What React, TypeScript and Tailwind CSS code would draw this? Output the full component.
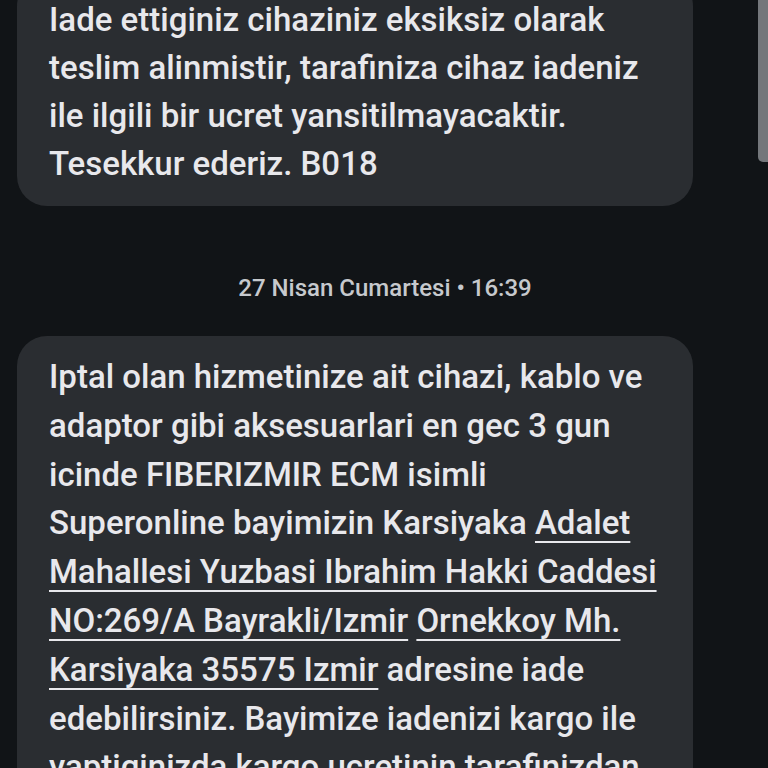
import React from 'react';

const font = { fontFamily: 'Roboto, "Noto Sans", sans-serif' };

function Link({ children }: { children: React.ReactNode }) {
  return <span className="underline decoration-2 underline-offset-[7px]">{children}</span>;
}

export default function App() {
  return (
    <div className="relative h-[768px] w-[768px] overflow-hidden bg-[#111417]" style={font}>
      {/* scrollbar thumb */}
      <div className="absolute right-0 top-0 h-[162px] w-[10px] rounded-bl-[5px] bg-[#74777b]" />

      <div className="flex flex-col">
        {/* older message, scrolled past the top */}
        <div className="ml-[17px] mr-[75px] -mt-[24px] rounded-[30px] bg-[#2a2d31] px-[32px] pt-[20px] pb-[18px] text-[33px] font-medium leading-[48px] text-[#e8e8ec] whitespace-nowrap">
          <div>Iade ettiginiz cihaziniz eksiksiz olarak</div>
          <div>teslim alinmistir, tarafiniza cihaz iadeniz</div>
          <div>ile ilgili bir ucret yansitilmayacaktir.</div>
          <div>Tesekkur ederiz. B018</div>
        </div>

        <div className="flex h-[130px] items-center justify-center pt-[33px] pl-[2px] text-[24px] font-medium text-[#c6c9cd]">
          27 Nisan Cumartesi • 16:39
        </div>

        <div className="ml-[17px] mr-[75px] rounded-[30px] bg-[#2a2d31] px-[32px] pt-[17px] pb-[18px] text-[33px] font-medium leading-[48.8px] text-[#e8e8ec] whitespace-nowrap">
          <div>Iptal olan hizmetinize ait cihazi, kablo ve</div>
          <div>adaptor gibi aksesuarlari en gec 3 gun</div>
          <div>icinde FIBERIZMIR ECM isimli</div>
          <div>Superonline bayimizin Karsiyaka <Link>Adalet</Link></div>
          <div><Link>Mahallesi Yuzbasi Ibrahim Hakki Caddesi</Link></div>
          <div><Link>NO:269/A Bayrakli/Izmir</Link> <Link>Ornekkoy Mh.</Link></div>
          <div><Link>Karsiyaka 35575 Izmir</Link> adresine iade</div>
          <div>edebilirsiniz. Bayimize iadenizi kargo ile</div>
          <div>yaptiginizda kargo ucretinin tarafinizdan</div>
        </div>
      </div>
    </div>
  );
}
